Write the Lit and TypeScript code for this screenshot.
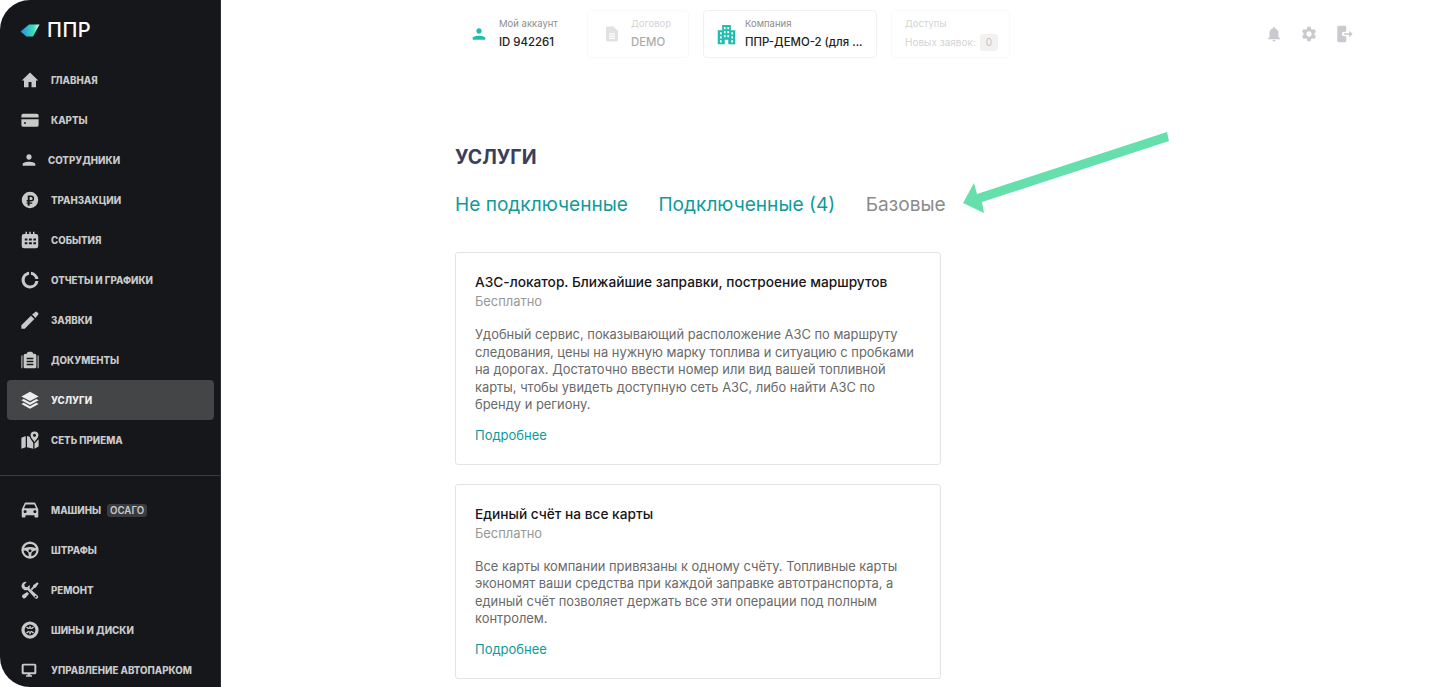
import { LitElement, html, css, svg } from "lit";
import { customElement } from "lit/decorators.js";

const p = (d: string) => svg`<path d=${d}></path>`;
const icons: Record<string, unknown> = {
  home: p("M10 21.500v-7h4v7h6v-9H23L12 2 1 12.500h3v9z"),
  card: svg`<path d="M3 3.500h18A2.500 2.500 0 0 1 23.500 6v2.500H.5V6A2.500 2.500 0 0 1 3 3.500z"></path><path fill-rule="evenodd" d="M.5 11h23v7.500A2.500 2.500 0 0 1 21 21H3a2.500 2.500 0 0 1-2.500-2.500zM4 15v2h2.500v-2z"></path>`,
  person: p("M12 11.500c2.210 0 4-1.790 4-4s-1.790-4-4-4-4 1.790-4 4 1.790 4 4 4zm0 3c-3.200 0-9.500 1.100-9.500 3.500v2.500h19V18c0-2.400-6.300-3.500-9.500-3.500z"),
  rub: svg`<path fill-rule="evenodd" d="M12 1a11 11 0 1 1 0 22 11 11 0 0 1 0-22zM9 6v6H7.500v2H9v1.200H7.500v1.800H9v2.500h2.500V17H15v-1.800h-3.500V14h2a4 4 0 0 0 0-8zm2.500 2h2a2 2 0 0 1 0 4h-2z"></path>`,
  cal: svg`<path fill-rule="evenodd" d="M5.500 1h2v3h3V1h2v3h3V1h2v3h2A3 3 0 0 1 22.500 7v13A3 3 0 0 1 19.500 23h-16A3 3 0 0 1 .5 20V7A3 3 0 0 1 3.500 4h2zM4.500 10v2.500h3.500V10zm5.500 0v2.500h4V10zm6 0v2.500h3.500V10zM4.500 15v2.500h3.500V15zm5.500 0v2.500h4V15zm6 0v2.500h3.500V15z" transform="translate(.5 0)"></path>`,
  donut: svg`<path d="M10.800 1v4a7.200 7.200 0 0 0-5.900 7.100c0 4 3.200 7.200 7.100 7.200a7.200 7.200 0 0 0 7.100-6.100h4.100A11.200 11.200 0 0 1 12 23.300C5.800 23.300.8 18.200.8 12 .8 6.300 5.100 1.600 10.800 1z"></path><path d="M13.300 1a11.200 11.200 0 0 1 9.900 9.800h-4.100a7.200 7.200 0 0 0-5.800-5.700z"></path>`,
  pen: p("M.5 19V23.500h4.500L17.810 10.700l-4.500-4.500L.5 19zM23 4.540a1 1 0 0 0 0-1.410L21 1a1 1 0 0 0-1.410 0l-4.800 3.800 4.500 4.500L23 4.540z"),
  doc: svg`<path fill-rule="evenodd" d="M8 3.500C8 2 9 1 10.500 1h3C15 1 16 2 16 3.500h2A2.500 2.500 0 0 1 20.500 6v15a2 2 0 0 1-2 2h-13a2 2 0 0 1-2-2V6A2.500 2.500 0 0 1 6 3.500zM7.500 9v2h9V9zm0 4v2h9v-2zm0 4v2h9v-2z"></path><path d="M.5 6h1.400v17H.5zM22.100 6h1.400v17h-1.400z"></path>`,
  layers: svg`<path d="M12 1 23.500 7.200 12 13.400.5 7.200z"></path><path d="M3.600 10.700 12 15.200l8.400-4.500 3.100 1.700L12 18.600.5 12.400z"></path><path d="M3.600 15.700 12 20.200l8.400-4.500 3.100 1.700L12 23.600.5 17.400z"></path>`,
  map: svg`<path fill-rule="evenodd" d="M18 .5a5.300 5.300 0 0 1 5.300 5.300c0 3-3.400 6.200-5.300 8.700-1.900-2.500-5.300-5.700-5.300-8.700A5.300 5.300 0 0 1 18 .5zm0 3.200a2 2 0 1 0 0 4 2 2 0 0 0 0-4z"></path><path d="M.5 9l5.800-2.500v15L.5 23.500zM8 6.500l3.500 1.300c.8 3 3 5.300 4.800 7.700v8L8 21.500zM18 16.500l5.500-5.500v9.800L18 23.500z"></path>`,
  car: p("M19.500 3.500C19.200 2.600 18.400 2 17.500 2h-11c-.9 0-1.700.6-2 1.500L1 11v10c0 .55.45 1 1 1h3c.55 0 1-.45 1-1v-2h12v2c0 .55.45 1 1 1h3c.55 0 1-.45 1-1V11l-3.500-7.500zM5.500 16c-1.100 0-2-.67-2-1.800s.9-1.800 2-1.800 2 .67 2 1.800-.9 1.800-2 1.800zm13 0c-1.100 0-2-.67-2-1.800s.9-1.800 2-1.800 2 .67 2 1.800-.9 1.800-2 1.800zM4 9.500l2.300-5h11.400l2.300 5H4z"),
  wheel: svg`<path fill-rule="evenodd" d="M12 .5a11.500 11.500 0 1 1 0 23 11.500 11.500 0 0 1 0-23zM4 9.500c2.500-.9 5.300-1.400 8-1.400s5.500.5 8 1.400A8.500 8.500 0 0 0 4 9.500zM3.500 12.500c.2 3.800 3 7 6.700 7.800v-2.800c0-2.500-2-5-6.700-5zm17 0c-4.700 0-6.700 2.500-6.700 5v2.800c3.700-.8 6.500-4 6.700-7.800zM12 11a2 2 0 1 0 0 4 2 2 0 0 0 0-4z"></path>`,
  tools: svg`<path fill-rule="evenodd" d="M5.500 1c.7 0 1.400.1 2 .4L4.400 4.500l.8 3 3 .8 3.100-3.100c.7 1.500.6 3.200-.1 4.600l11.100 9.700a2.500 2.500 0 0 1-.2 3.400 2.500 2.500 0 0 1-3.600-.1L8.800 12c-1.400.6-3.100.6-4.500-.1A5.800 5.800 0 0 1 .8 5.500 5.800 5.800 0 0 1 5.500 1zm14 18.500a1.300 1.300 0 1 0 0 2.600 1.300 1.300 0 0 0 0-2.600z"></path><path d="M21.800 1.500l1.700 1.700-4 5.800-1.800.4-3 3-1.900-1.700 3-3 .4-2z"></path><path d="M8.300 14.500l2.400 2.400-4.400 5.400a2.700 2.700 0 0 1-4-.1 2.700 2.700 0 0 1 .1-3.900z"></path>`,
  tire: svg`<path fill-rule="evenodd" d="M12 .5a11.500 11.500 0 1 1 0 23 11.500 11.500 0 0 1 0-23zm0 4.300a7.200 7.200 0 1 0 0 14.400 7.200 7.200 0 0 0 0-14.400z"></path><path d="M11 6.500h2v4h-2zm0 7h2v4h-2zM6.700 9.100l1-1.700 3.400 2-1 1.700zm6.200 5.500 1-1.700 3.400 2-1 1.700zM6.700 14.900l3.400-2 1 1.700-3.400 2zM12.900 9.400l3.400-2 1 1.700-3.400 2z"></path>`,
  monitor: svg`<path fill-rule="evenodd" d="M3.500 2.500h17A2.500 2.500 0 0 1 23 5v11a2.500 2.500 0 0 1-2.500 2.500H14V20h2.500v2h-9v-2H10v-1.500H3.500A2.500 2.500 0 0 1 1 16V5a2.500 2.500 0 0 1 2.500-2.500zm.5 2.700v10.300h16V5.200z"></path>`,
  bell: p("M12 22c1.100 0 2-.9 2-2h-4c0 1.100.9 2 2 2zm6-6v-5c0-3.070-1.630-5.640-4.500-6.320V4c0-.83-.67-1.500-1.500-1.500s-1.500.67-1.500 1.500v.68C7.640 5.360 6 7.920 6 11v5l-2 2v1h16v-1l-2-2z"),
  gear: p("M19.140 12.940c.04-.3.06-.61.06-.94 0-.32-.02-.64-.07-.94l2.030-1.580a.49.49 0 0 0 .12-.61l-1.920-3.320a.488.488 0 0 0-.59-.22l-2.390.96c-.5-.38-1.030-.7-1.620-.94l-.36-2.540a.484.484 0 0 0-.48-.41h-3.840c-.24 0-.43.17-.47.41l-.36 2.540c-.59.24-1.130.57-1.620.94l-2.390-.96c-.22-.08-.47 0-.59.22L2.740 8.870c-.12.21-.08.47.12.61l2.030 1.580c-.05.3-.09.63-.09.94s.02.64.07.94l-2.030 1.580a.49.49 0 0 0-.12.61l1.920 3.320c.12.22.37.29.59.22l2.390-.96c.5.38 1.030.7 1.620.94l.36 2.540c.05.24.24.41.48.41h3.840c.24 0 .44-.17.47-.41l.36-2.540c.59-.24 1.130-.56 1.620-.94l2.390.96c.22.08.47 0 .59-.22l1.920-3.320c.12-.22.07-.47-.12-.61l-2.010-1.580zM12 15.600c-1.980 0-3.600-1.620-3.600-3.600s1.620-3.600 3.600-3.600 3.600 1.620 3.600 3.600-1.620 3.600-3.600 3.600z"),
  exit: svg`<path d="M3 3a2 2 0 0 1 2-2h8a2 2 0 0 1 2 2v6h-3a3 3 0 0 0 0 6h3v6a2 2 0 0 1-2 2H5a2 2 0 0 1-2-2z"></path><path d="M12 11h7V7.500l4.500 4.500-4.500 4.500V13h-7z"></path>`,
  file: svg`<path fill-rule="evenodd" d="M6 2h8l6 6v12a2 2 0 0 1-2 2H6a2 2 0 0 1-2-2V4a2 2 0 0 1 2-2zm2 9v1.500h8V11zm0 3v1.500h8V14zm0 3v1.500h8V17z"></path>`,
  building: svg`<path fill-rule="evenodd" d="M7 1h10v6h5v16h-8v-5h-4v5H2V7h5zM9 3.500V6h2V3.500zm4 0V6h2V3.500zM9 8v2.500h2V8zm4 0v2.500h2V8zM4.500 9.500V12h2V9.500zm13 0V12h2V9.500zM9 12.500V15h2v-2.500zm4 0V15h2v-2.500zM4.500 14v2.500h2V14zm13 0v2.500h2V14zM4.500 18.500V21h2v-2.500zm13 0V21h2v-2.500z"></path>`,
};

const nav1 = [
  ["home", "Главная", 18], ["card", "Карты", 18], ["person", "Сотрудники", 16], ["rub", "Транзакции", 18],
  ["cal", "События", 18], ["donut", "Отчеты и графики", 18], ["pen", "Заявки", 18], ["doc", "Документы", 18],
  ["layers", "Услуги", 18], ["map", "Сеть приема", 18],
] as const;
const nav2 = [
  ["car", "Машины", 18], ["wheel", "Штрафы", 18], ["tools", "Ремонт", 18], ["tire", "Шины и диски", 18], ["monitor", "Управление автопарком", 16],
] as const;

const cards = [
  {
    title: "АЗС-локатор. Ближайшие заправки, построение маршрутов",
    lines: [
      "Удобный сервис, показывающий расположение АЗС по маршруту",
      "следования, цены на нужную марку топлива и ситуацию с пробками",
      "на дорогах. Достаточно ввести номер или вид вашей топливной",
      "карты, чтобы увидеть доступную сеть АЗС, либо найти АЗС по",
      "бренду и региону.",
    ],
  },
  {
    title: "Единый счёт на все карты",
    lines: [
      "Все карты компании привязаны к одному счёту. Топливные карты",
      "экономят ваши средства при каждой заправке автотранспорта, а",
      "единый счёт позволяет держать все эти операции под полным",
      "контролем.",
    ],
  },
];

@customElement("app-root")
export class AppRoot extends LitElement {
  static styles = css`
    :host {
      display: flex;
      position: relative;
      width: 1449px;
      height: 687px;
      overflow: hidden;
      background: #fff;
      font-family: Inter, "Noto Sans", sans-serif;
    }
    svg.i { fill: currentColor; display: block; flex: none; }
    .side {
      width: 221px;
      flex: none;
      height: 687px;
      box-sizing: border-box;
      background: #16171a;
      border-right: 1px solid #2c2d30;
      border-radius: 30px 0 0 30px;
      color: #c9c9c9;
      overflow: hidden;
    }
    .logo {
      display: flex;
      align-items: center;
      gap: 7px;
      height: 60px;
      padding-left: 20px;
      color: #fff;
      font-size: 20px;
      font-weight: 500;
      letter-spacing: .5px;
    }
    .nav { padding: 0 6px 0 7px; }
    .item {
      height: 40px;
      display: flex;
      align-items: center;
      border-radius: 4px;
      font-size: 9.700px;
      font-weight: 800;
      text-transform: uppercase;
      white-space: nowrap;
    }
    .item.active { background: #444547; color: #eee; }
    .ic { width: 44px; flex: none; display: flex; padding-left: 14px; box-sizing: border-box; }
    .tight { margin-left: -3px; }
    .sep { height: 1px; background: #3a3b3e; margin: 15px 0 14px; }
    .badge {
      margin-left: 6px;
      background: #3a3b3e;
      border-radius: 3px;
      padding: 1px 3px;
      font-weight: 600;
    }
    .main { flex: 1; min-width: 0; padding: 10px 96px 0 234px; box-sizing: border-box; }
    .top { display: flex; align-items: center; gap: 14px; }
    .tcard {
      height: 48px;
      box-sizing: border-box;
      border: 1px solid #f1f1f2;
      border-radius: 4px;
      display: flex;
      align-items: center;
      gap: 10px;
      padding: 0 13px;
      color: #1fbdaf;
      white-space: nowrap;
    }
    .tcard.plain { border-color: transparent; width: 118px; padding-left: 15px; gap: 12px; }
    .tcard.doc { width: 102px; padding-left: 15px; }
    .tcard.company { width: 174px; padding-left: 12px; gap: 8px; }
    .tcard.access { width: 119px; }
    .tcard.off { opacity: .38; }
    .tcard.off svg { color: #b5b5b8; }
    .tl { font-size: 9.500px; color: #8d8d8d; line-height: 14px; }
    .tv { font-size: 11.400px; font-weight: 500; color: #222; line-height: 18px; margin-top: 2px; }
    .tv.sm { font-size: 10px; color: #8d8d8d; font-weight: 400; display: flex; align-items: center; gap: 4px; }
    .zero { background: #ddd; border-radius: 3px; padding: 0 6px; font-size: 10px; color: #555; line-height: 17px; }
    .acts { margin-left: auto; display: flex; gap: 17px; color: #c9cacf; }
    h1 { margin: 87px 0 0; font-size: 19.500px; line-height: 24px; font-weight: 700; color: #3b3f5c; }
    .tabs { display: flex; gap: 30.500px; margin-top: 22px; font-size: 19.100px; line-height: 26px; color: #109a9c; }
    .tabs .cur { color: #8b8b8b; }
    .card {
      width: 486px;
      box-sizing: border-box;
      border: 1px solid #e4e4e4;
      border-radius: 3px;
      padding: 19px;
      margin-bottom: 19px;
    }
    .cards { margin-top: 35px; }
    .ct { font-size: 13.700px; font-weight: 500; line-height: 20px; color: #17171a; }
    .cp { font-size: 12.900px; line-height: 20px; color: #989898; }
    .cd { margin-top: 14px; font-size: 12.900px; line-height: 17.500px; color: #6a6a6a; white-space: nowrap; }
    .cl { margin-top: 11px; font-size: 13px; line-height: 20px; color: #109a9c; }
    .arrow { position: absolute; left: 0; top: 0; pointer-events: none; }
  `;

  icon(name: string, size: number) {
    return html`<svg class="i" viewBox="0 0 24 24" width=${size} height=${size}>${icons[name]}</svg>`;
  }

  render() {
    return html`
      <aside class="side">
        <div class="logo">
          <svg width="20" height="13" viewBox="0 0 20 13">
            <defs><linearGradient id="lg" x1="0" x2="1"><stop offset="0" stop-color="#1f8fe0"></stop><stop offset=".7" stop-color="#3fe0b8"></stop><stop offset="1" stop-color="#dff"></stop></linearGradient></defs>
            <path d="M9 .5H19.500L13 12.500H6.500L.5 7.500z" fill="url(#lg)"></path>
          </svg>
          <span>ППР</span>
        </div>
        <nav class="nav">
          ${nav1.map(([ic, label, s]) => html`
            <div class="item ${label === "Услуги" ? "active" : ""}">
              <span class="ic">${this.icon(ic, s)}</span>
              <span class="${label === "Сотрудники" ? "tight" : ""}">${label}</span>
            </div>`)}
        </nav>
        <div class="sep"></div>
        <nav class="nav">
          ${nav2.map(([ic, label, s]) => html`
            <div class="item">
              <span class="ic">${this.icon(ic, s)}</span>
              <span>${label}</span>
              ${label === "Машины" ? html`<span class="badge">ОСАГО</span>` : ""}
            </div>`)}
        </nav>
      </aside>
      <main class="main">
        <header class="top">
          <div class="tcard plain">
            ${this.icon("person", 16)}
            <div><div class="tl">Мой аккаунт</div><div class="tv">ID 942261</div></div>
          </div>
          <div class="tcard off doc">
            ${this.icon("file", 18)}
            <div><div class="tl">Договор</div><div class="tv">DEMO</div></div>
          </div>
          <div class="tcard company">
            ${this.icon("building", 21)}
            <div><div class="tl">Компания</div><div class="tv">ППР-ДЕМО-2 (для ...</div></div>
          </div>
          <div class="tcard off access">
            <div><div class="tl">Доступы</div><div class="tv sm">Новых заявок: <span class="zero">0</span></div></div>
          </div>
          <div class="acts">
            ${this.icon("bell", 18)}${this.icon("gear", 18)}${this.icon("exit", 18)}
          </div>
        </header>
        <h1>УСЛУГИ</h1>
        <div class="tabs">
          <span>Не подключенные</span>
          <span>Подключенные (4)</span>
          <span class="cur">Базовые</span>
        </div>
        <div class="cards">
          ${cards.map((c) => html`
            <section class="card">
              <div class="ct">${c.title}</div>
              <div class="cp">Бесплатно</div>
              <div class="cd">${c.lines.map((l) => html`<div>${l}</div>`)}</div>
              <div class="cl">Подробнее</div>
            </section>`)}
        </div>
      </main>
      <svg class="arrow" width="1449" height="687">
        <path d="M1167 132 1169 141 982 202 984 213 963 203 974 183 977 194z" fill="#65e0ad"></path>
      </svg>
    `;
  }
}
